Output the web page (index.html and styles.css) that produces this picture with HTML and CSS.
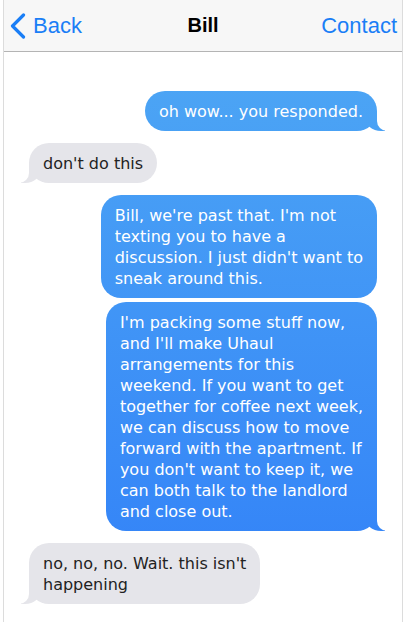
FILE: index.html
```html
<!DOCTYPE html>
<html lang="en">
<head>
    <meta charset="UTF-8">
    <meta name="viewport" content="width=device-width, initial-scale=1.0">
    <title>Bill</title>
    <link rel="stylesheet" href="styles.css">
</head>
<body>
    <div class="phone">
        <header class="nav">
            <a class="nav-back" href="#">
                <svg class="chevron" width="16" height="26" viewBox="0 0 16 26">
                    <polyline points="13.5,2 2.5,13 13.5,24" />
                </svg>
                Back
            </a>
            <h1 class="nav-title">Bill</h1>
            <a class="nav-action" href="#">Contact</a>
        </header>

        <main class="thread">
            <p class="msg out tail">oh wow... you responded.</p>
            <p class="msg in tail">don't do this</p>
            <p class="msg out">Bill, we're past that. I'm not<br>texting you to have a<br>discussion. I just didn't want to<br>sneak around this.</p>
            <p class="msg out tail same">I'm packing some stuff now,<br>and I'll make Uhaul<br>arrangements for this<br>weekend. If you want to get<br>together for coffee next week,<br>we can discuss how to move<br>forward with the apartment. If<br>you don't want to keep it, we<br>can both talk to the landlord<br>and close out.</p>
            <p class="msg in tail">no, no, no. Wait. this isn't<br>happening</p>
        </main>
    </div>
</body>
</html>
```

FILE: styles.css
```css
body {
    margin: 0;
    padding: 0;
    background: #fff;
    font-family: "DejaVu Sans", Verdana, sans-serif;
}

.phone {
    margin: 0 3px;
    min-height: 100vh;
    border-left: 1px solid #dcdcdc;
    border-right: 1px solid #dcdcdc;
    box-sizing: border-box;
}

/* top bar */
.nav {
    display: grid;
    grid-template-columns: 1fr auto 1fr;
    align-items: center;
    height: 51px;
    background: #f7f7f7;
    border-bottom: 1px solid #b4b4b4;
    font-family: "Liberation Sans", Arial, sans-serif;
}
.nav a {
    color: #1a7ef6;
    text-decoration: none;
    font-size: 22px;
}
.nav-back {
    display: flex;
    align-items: center;
    gap: 7px;
    padding-left: 6px;
}
.chevron polyline {
    fill: none;
    stroke: #1a7ef6;
    stroke-width: 3.2;
    stroke-linecap: round;
    stroke-linejoin: round;
}
.nav-title {
    margin: 0;
    font-size: 20px;
    font-weight: bold;
    color: #000;
}
.nav-action {
    justify-self: end;
    padding-right: 5px;
}

/* messages */
.thread {
    display: flex;
    flex-direction: column;
    padding: 39px 0 20px;
}
.msg {
    position: relative;
    max-width: 290px;
    box-sizing: border-box;
    margin: 12px 0 0;
    padding: 10px 14px 9px;
    border-radius: 20px;
    font-size: 16px;
    line-height: 21px;
}
.msg:first-child {
    margin-top: 0;
}
.msg.same {
    margin-top: 4px;
}
.out {
    align-self: flex-end;
    margin-right: 25px;
    color: #fff;
    /* blue gets deeper further down the screen */
    background: linear-gradient(to bottom, #50aaf4, #3180f8) fixed;
}
.in {
    align-self: flex-start;
    margin-left: 25px;
    color: #222;
    background: #e5e5ea;
}

/* bubble tails */
.tail::before,
.tail::after {
    content: "";
    position: absolute;
    bottom: 0;
    height: 20px;
}
.out.tail::before {
    right: -8px;
    width: 20px;
    background: linear-gradient(to bottom, #50aaf4, #3180f8) fixed;
    border-bottom-left-radius: 16px 14px;
}
.out.tail::after {
    right: -10px;
    width: 10px;
    background: #fff;
    border-bottom-left-radius: 10px;
}
.in.tail::before {
    left: -8px;
    width: 20px;
    background: #e5e5ea;
    border-bottom-right-radius: 16px 14px;
}
.in.tail::after {
    left: -10px;
    width: 10px;
    background: #fff;
    border-bottom-right-radius: 10px;
}
```
